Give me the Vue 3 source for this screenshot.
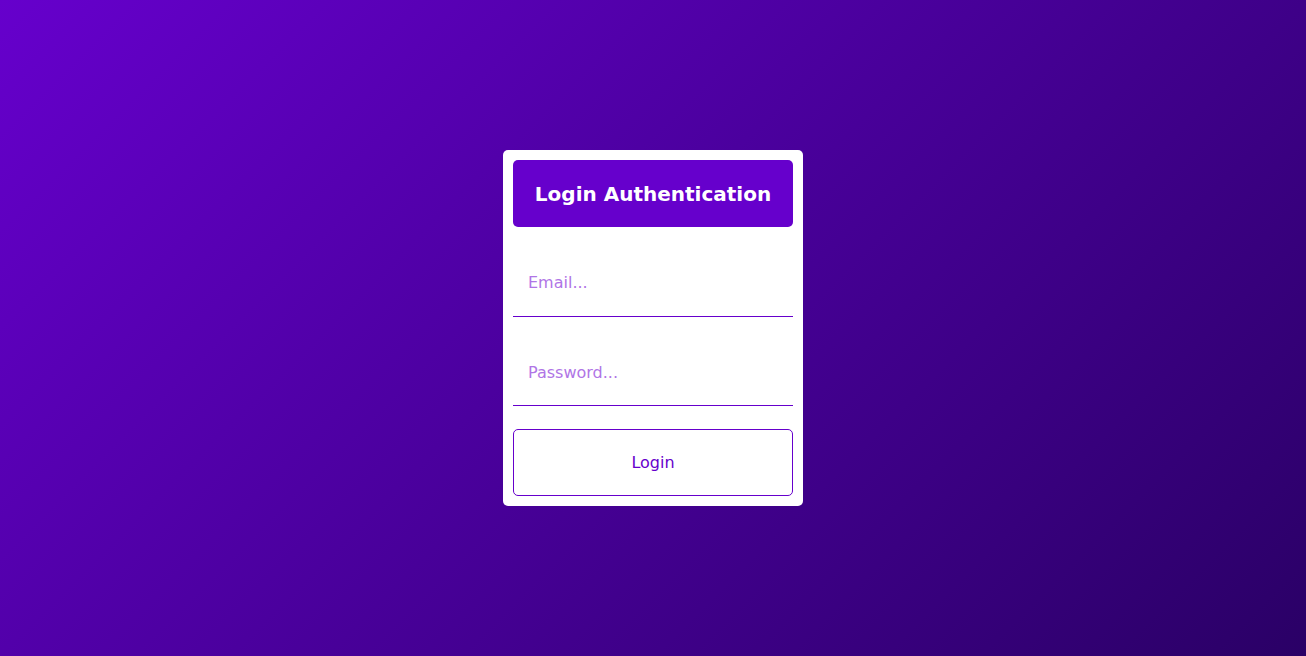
<script setup>
import { ref } from 'vue'

const email = ref('')
const password = ref('')
</script>

<template>
  <main class="page">
    <form class="card" @submit.prevent>
      <h1 class="title">Login Authentication</h1>
      <input v-model="email" class="field" type="email" placeholder="Email..." aria-label="Email" />
      <input v-model="password" class="field" type="password" placeholder="Password..." aria-label="Password" />
      <button class="submit" type="submit">Login</button>
    </form>
  </main>
</template>

<style>
body {
  margin: 0;
}
</style>

<style scoped>
.page {
  display: flex;
  align-items: center;
  justify-content: center;
  min-height: 100vh;
  background: linear-gradient(135deg, #6600cc, #2a0066);
  font-family: "DejaVu Sans", sans-serif;
}

.card {
  box-sizing: border-box;
  display: grid;
  align-content: space-between;
  width: 300px;
  max-width: 100%;
  min-height: 356px;
  padding: 10px;
  border-radius: 5px;
  background: #fff;
}

.title {
  display: flex;
  align-items: center;
  justify-content: center;
  min-height: 67px;
  margin: 0;
  border-radius: 5px;
  background: #6600cc;
  color: #fff;
  font-size: 20px;
  font-weight: 700;
  line-height: 24px;
  text-align: center;
}

.field {
  box-sizing: border-box;
  width: 100%;
  height: 67px;
  padding: 0 15px;
  border: 0;
  border-bottom: 1px solid #6600cc;
  border-radius: 0;
  outline: 0;
  background: transparent;
  color: #6600cc;
  font: inherit;
  font-size: 16px;
}

.field::placeholder {
  color: #b075e6;
  opacity: 1;
}

.submit {
  height: 67px;
  border: 1px solid #6600cc;
  border-radius: 5px;
  background: #fff;
  color: #6600cc;
  font: inherit;
  font-size: 16px;
  cursor: pointer;
}
</style>
